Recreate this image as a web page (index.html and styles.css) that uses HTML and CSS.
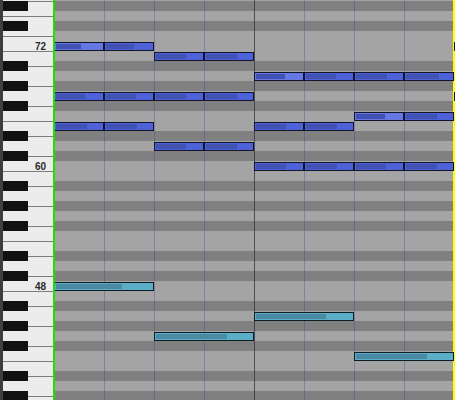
FILE: index.html
```html
<!DOCTYPE html>
<html>
<head>
<meta charset="utf-8">
<link rel="stylesheet" href="styles.css">
</head>
<body>
<div class="app">
  <div class="strip"></div>
  <div class="keys">
    <div class="whites">
      <div class="wk top"></div>
      <div class="wk s"></div><div class="wk l"></div><div class="wk s"></div>
      <div class="wk s"></div><div class="wk l"></div><div class="wk l"></div><div class="wk s"></div><div class="wk s"></div><div class="wk l"></div><div class="wk s"></div>
      <div class="wk s"></div><div class="wk l"></div><div class="wk l"></div><div class="wk s"></div><div class="wk s"></div><div class="wk l"></div><div class="wk s"></div>
      <div class="wk s"></div><div class="wk l"></div><div class="wk l"></div><div class="wk s"></div><div class="wk s"></div><div class="wk l"></div><div class="wk s"></div>
    </div>
    <div class="krows">
      <div class="kr"></div><div class="kr"><span class="bk"></span></div><div class="kr"></div><div class="kr"><span class="bk"></span></div><div class="kr"></div>
      <div class="kr"><span class="lbl">72</span></div>
      <div class="kr"></div><div class="kr"><span class="bk"></span></div><div class="kr"></div><div class="kr"><span class="bk"></span></div><div class="kr"></div><div class="kr"><span class="bk"></span></div><div class="kr"></div><div class="kr"></div><div class="kr"><span class="bk"></span></div><div class="kr"></div><div class="kr"><span class="bk"></span></div>
      <div class="kr"><span class="lbl">60</span></div>
      <div class="kr"></div><div class="kr"><span class="bk"></span></div><div class="kr"></div><div class="kr"><span class="bk"></span></div><div class="kr"></div><div class="kr"><span class="bk"></span></div><div class="kr"></div><div class="kr"></div><div class="kr"><span class="bk"></span></div><div class="kr"></div><div class="kr"><span class="bk"></span></div>
      <div class="kr"><span class="lbl">48</span></div>
      <div class="kr"></div><div class="kr"><span class="bk"></span></div><div class="kr"></div><div class="kr"><span class="bk"></span></div><div class="kr"></div><div class="kr"><span class="bk"></span></div><div class="kr"></div><div class="kr"></div><div class="kr"><span class="bk"></span></div><div class="kr"></div><div class="kr"><span class="bk"></span></div>
    </div>
  </div>
  <div class="roll">
    <div class="lanes">
      <div class="lane"></div>
      <div class="lane dk"></div>
      <div class="lane"></div>
      <div class="lane dk"></div>
      <div class="lane"></div>
      <!-- 72 -->
      <div class="lane">
        <i class="n hi c0"><b style="width:25px"></b></i>
        <i class="n c1"><b style="width:28px"></b></i>
        <i class="n c8"><b style="width:25px"></b></i>
      </div>
      <!-- 71 -->
      <div class="lane">
        <i class="n c2"><b style="width:30px"></b></i>
        <i class="n c3"><b style="width:31px"></b></i>
      </div>
      <div class="lane dk"></div>
      <!-- 69 -->
      <div class="lane">
        <i class="n hi c4"><b style="width:29px"></b></i>
        <i class="n c5"><b style="width:30px"></b></i>
        <i class="n c6"><b style="width:31px"></b></i>
        <i class="n c7"><b style="width:33px"></b></i>
      </div>
      <div class="lane dk"></div>
      <!-- 67 -->
      <div class="lane">
        <i class="n c0"><b style="width:29px"></b></i>
        <i class="n c1"><b style="width:30px"></b></i>
        <i class="n c2"><b style="width:30px"></b></i>
        <i class="n c3"><b style="width:31px"></b></i>
        <i class="n c8"><b style="width:29px"></b></i>
      </div>
      <div class="lane dk"></div>
      <!-- 65 -->
      <div class="lane">
        <i class="n hi c6"><b style="width:29px"></b></i>
        <i class="n c7"><b style="width:31px"></b></i>
      </div>
      <!-- 64 -->
      <div class="lane">
        <i class="n c0"><b style="width:31px"></b></i>
        <i class="n c1"><b style="width:31px"></b></i>
        <i class="n c4"><b style="width:30px"></b></i>
        <i class="n c5"><b style="width:31px"></b></i>
      </div>
      <div class="lane dk"></div>
      <!-- 62 -->
      <div class="lane">
        <i class="n c2"><b style="width:30px"></b></i>
        <i class="n c3"><b style="width:31px"></b></i>
      </div>
      <div class="lane dk"></div>
      <!-- 60 -->
      <div class="lane">
        <i class="n c4"><b style="width:30px"></b></i>
        <i class="n c5"><b style="width:31px"></b></i>
        <i class="n c6"><b style="width:30px"></b></i>
        <i class="n c7"><b style="width:31px"></b></i>
      </div>
      <div class="lane"></div>
      <div class="lane dk"></div>
      <div class="lane"></div>
      <div class="lane dk"></div>
      <div class="lane"></div>
      <div class="lane dk"></div>
      <div class="lane"></div>
      <div class="lane"></div>
      <div class="lane dk"></div>
      <div class="lane"></div>
      <div class="lane dk"></div>
      <!-- 48 -->
      <div class="lane">
        <i class="n bass c0 w2"><b style="width:66px"></b></i>
      </div>
      <div class="lane"></div>
      <div class="lane dk"></div>
      <!-- 45 -->
      <div class="lane">
        <i class="n bass c4 w2"><b style="width:70px"></b></i>
      </div>
      <div class="lane dk"></div>
      <!-- 43 -->
      <div class="lane">
        <i class="n bass c2 w2"><b style="width:71px"></b></i>
      </div>
      <div class="lane dk"></div>
      <!-- 41 -->
      <div class="lane">
        <i class="n bass c6 w2"><b style="width:71px"></b></i>
      </div>
      <div class="lane"></div>
      <div class="lane dk"></div>
      <div class="lane"></div>
      <div class="lane dk"></div>
    </div>
  </div>
</div>
</body>
</html>
```
FILE: styles.css
```css
html, body {
  margin: 0;
  padding: 0;
  background: #a4a4a4;
}

.app {
  display: flex;
  width: 455px;
  height: 400px;
  overflow: hidden;
}

.strip {
  width: 3px;
  flex: none;
  background: #3e3e3e;
}

.keys {
  position: relative;
  width: 50px;
  flex: none;
  background: #ececec;
  border-right: 1px solid #22dd00;
  overflow: hidden;
}

.whites {
  display: flex;
  flex-direction: column;
}

.wk {
  flex: none;
  box-sizing: border-box;
  border-top: 1px solid #7c7c7c;
}

.wk.top { height: 1px; border-top: 0; }
.wk.s { height: 15px; }
.wk.l { height: 20px; }

.krows {
  position: absolute;
  left: 0;
  top: 0;
  right: 0;
  bottom: 0;
  display: flex;
  flex-direction: column;
  margin-top: -9px;
}

.kr {
  flex: none;
  height: 10px;
  display: flex;
  justify-content: space-between;
  position: relative;
}

.bk {
  display: block;
  width: 25px;
  height: 10px;
  background: #111111;
}

.lbl {
  margin-left: auto;
  padding-right: 7px;
  font: bold 10px/11px "Liberation Sans", Arial, sans-serif;
  color: #2c2c2c;
}

.roll {
  position: relative;
  flex: 1;
  overflow: hidden;
}

.roll::before {
  content: "";
  position: absolute;
  left: 0;
  top: 0;
  bottom: 0;
  width: 1px;
  background: #22dd00;
  z-index: 5;
}

.roll::after {
  content: "";
  position: absolute;
  right: 0;
  top: 0;
  bottom: 0;
  width: 2px;
  background: #ffff00;
  z-index: 1;
}

.lanes {
  display: flex;
  flex-direction: column;
  margin-top: -9px;
}

.lane {
  position: relative;
  flex: none;
  height: 10px;
  background-color: #a4a4a4;
  background-image:
    linear-gradient(to right, transparent 200px, rgba(40, 40, 55, 0.6) 200px, rgba(40, 40, 55, 0.6) 201px, transparent 201px),
    repeating-linear-gradient(to right, rgba(60, 50, 150, 0.3) 0, rgba(60, 50, 150, 0.3) 1px, transparent 1px, transparent 50px);
}

.lane.dk {
  background-color: #808080;
}

.n {
  position: absolute;
  top: 1px;
  height: 9px;
  width: 50px;
  box-sizing: border-box;
  border: 1px solid #141428;
  padding: 1px;
  background: #4d62d8;
  z-index: 2;
}

.n.hi { background: #6477e3; }

.n b {
  display: block;
  height: 5px;
  background: #4152b3;
}

.n.bass {
  background: #5aaec7;
  border-color: #0f1c24;
}

.n.bass b { background: #4a8aa2; }

.c0 { left: 0; }
.c1 { left: 50px; }
.c2 { left: 100px; }
.c3 { left: 150px; }
.c4 { left: 200px; }
.c5 { left: 250px; }
.c6 { left: 300px; }
.c7 { left: 350px; }
.c8 { left: 400px; }
.w2 { width: 100px; }
```
